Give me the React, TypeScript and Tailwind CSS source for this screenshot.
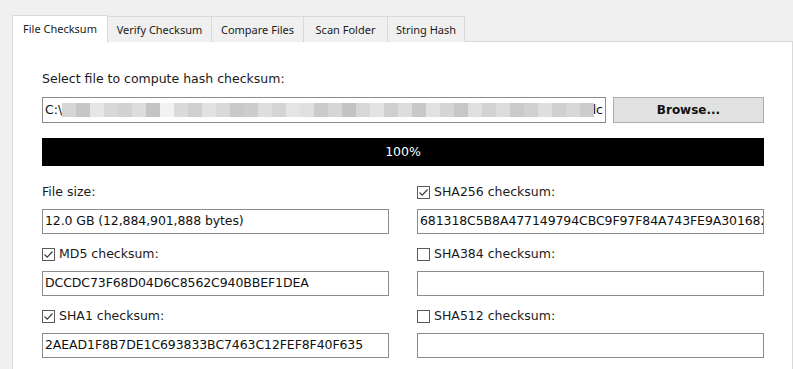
import React from "react";

const TABS = [
  { label: "File Checksum", w: "w-[96px]" },
  { label: "Verify Checksum", w: "w-[104px]" },
  { label: "Compare Files", w: "w-[92px]" },
  { label: "Scan Folder", w: "w-[84px]" },
  { label: "String Hash", w: "w-[77px]" },
];

// pixelated redaction blocks inside the path box
const BLOCKS = [
  "#d6d6d6", "#c6c6c6", "#e6e6e6", "#d8d8d8", "#d2d2d2", "#dcdcdc", "#c4c4c4", "#f2f2f2",
  "#dadada", "#cfcfcf", "#e2e2e2", "#d9d9d9", "#c9c9c9", "#cdcdcd", "#dedede", "#d4d4d4",
  "#e4e4e4", "#e0e0e0", "#cbcbcb", "#d6d6d6", "#c3c3c3", "#d7d7d7", "#e3e3e3", "#cfcfcf",
  "#dddddd", "#c8c8c8", "#e1e1e1", "#d5d5d5", "#c7c7c7", "#e0e0e0", "#d3d3d3", "#dcdcdc",
  "#cacaca", "#d1d1d1", "#dfdfdf", "#d0d0d0", "#d8d8d8", "#cccccc",
];

const font = "font-['DejaVu_Sans',sans-serif]";

const Check = ({ checked }: { checked: boolean }) => (
  <span className="w-[13px] h-[13px] border border-[#5a5a5a] bg-white flex items-center justify-center shrink-0">
    {checked && (
      <svg width="11" height="11" viewBox="0 0 11 11">
        <path d="M1.5 5.5 L4.2 8.2 L9.5 2.5" fill="none" stroke="#3c3c3c" strokeWidth="1.2" />
      </svg>
    )}
  </span>
);

const Field = ({
  label,
  value,
  check,
}: {
  label: string;
  value: string;
  check?: boolean;
}) => (
  <div>
    <div className="h-[18px] flex items-center gap-[4px] text-[#1a1a1a]">
      {check !== undefined && <Check checked={check} />}
      <span>{label}</span>
    </div>
    <div className="mt-[8px] h-[25px] border border-[#8c8c8c] bg-white px-[2px] flex items-center overflow-hidden whitespace-nowrap text-[#111] tracking-[-0.1px]">
      {value}
    </div>
  </div>
);

const App = () => {
  return (
    <div className={`w-[793px] h-[369px] bg-[#f0f0f0] overflow-hidden pt-[14px] pl-[12px] ${font} text-[12.5px]`}>
      {/* Tabs */}
      <div className="flex items-end h-[28px] font-['Noto_Sans',sans-serif] text-[11px] text-[#1a1a1a]">
        {TABS.map((t, i) =>
          i === 0 ? (
            <div
              key={t.label}
              className={`${t.w} h-[28px] bg-white border-l border-t border-r border-[#d9d9d9] relative z-10 -mb-px flex justify-center pt-[5px]`}
            >
              {t.label}
            </div>
          ) : (
            <div
              key={t.label}
              className={`${t.w} h-[26px] bg-[#f0f0f0] border-t border-r border-[#d9d9d9] flex items-center justify-center pt-[1px]`}
            >
              {t.label}
            </div>
          )
        )}
      </div>

      {/* Panel */}
      <div className="w-[781px] h-[400px] bg-white border border-[#d9d9d9] -mt-px pl-[29px] pt-[28px]">
        <div className="w-[722px]">
          <div className="h-[18px] flex items-center text-[#1a1a1a]">
            Select file to compute hash checksum:
          </div>

          <div className="mt-[9px] flex gap-[7px]">
            <div className="w-[564px] h-[26px] border border-[#8c8c8c] bg-white px-[2px] flex items-center overflow-hidden whitespace-nowrap text-[#111]">
              <span>C:\</span>
              <div className="flex h-[14px] relative z-10">
                {BLOCKS.map((c, i) => (
                  <div key={i} className="w-[14px] h-full" style={{ backgroundColor: c }} />
                ))}
              </div>
              <span className="-ml-[6px]">dc</span>
            </div>
            <button className="flex-1 h-[26px] bg-[#e1e1e1] border border-[#adadad] font-bold text-[12px] text-[#111]">
              Browse...
            </button>
          </div>

          <div className="mt-[15px] h-[28px] bg-black text-white flex items-center justify-center">
            100%
          </div>

          <div className="mt-[17px] grid grid-cols-2 gap-x-[28px]">
            <div className="flex flex-col gap-[11px]">
              <Field label="File size:" value="12.0 GB (12,884,901,888 bytes)" />
              <Field label="MD5 checksum:" value="DCCDC73F68D04D6C8562C940BBEF1DEA" check={true} />
              <Field label="SHA1 checksum:" value="2AEAD1F8B7DE1C693833BC7463C12FEF8F40F635" check={true} />
            </div>
            <div className="flex flex-col gap-[11px]">
              <Field label="SHA256 checksum:" value="681318C5B8A477149794CBC9F97F84A743FE9A301682" check={true} />
              <Field label="SHA384 checksum:" value="" check={false} />
              <Field label="SHA512 checksum:" value="" check={false} />
            </div>
          </div>
        </div>
      </div>
    </div>
  );
};

export default App;
